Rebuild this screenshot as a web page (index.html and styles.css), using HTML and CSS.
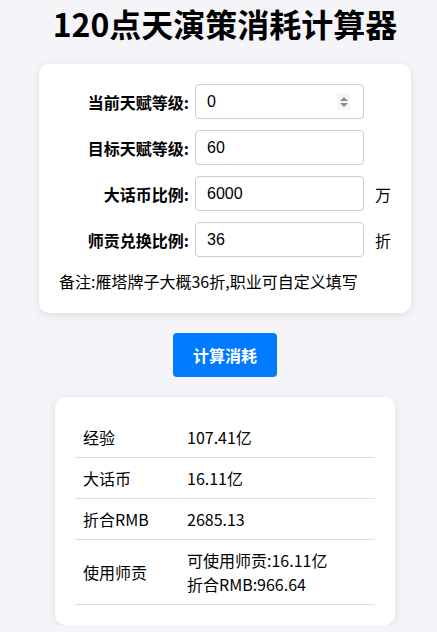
FILE: index.html
```html
<!DOCTYPE html>
<html lang="zh-CN">
<head>
<meta charset="utf-8">
<title>120点天演策消耗计算器</title>
<link rel="stylesheet" href="styles.css">
</head>
<body>
<div class="page">
  <h1 class="title">120点天演策消耗计算器</h1>
  <div class="card form-card">
    <div class="form-row">
      <label class="label">当前天赋等级:</label>
      <div class="field">
        <input class="input" type="text" value="0">
        <span class="spinner"><span class="tri up"></span><span class="tri down"></span></span>
      </div>
    </div>
    <div class="form-row">
      <label class="label">目标天赋等级:</label>
      <div class="field"><input class="input" type="text" value="60"></div>
    </div>
    <div class="form-row">
      <label class="label">大话币比例:</label>
      <div class="field"><input class="input" type="text" value="6000"></div>
      <span class="unit">万</span>
    </div>
    <div class="form-row">
      <label class="label">师贡兑换比例:</label>
      <div class="field"><input class="input" type="text" value="36"></div>
      <span class="unit">折</span>
    </div>
    <p class="note">备注:雁塔牌子大概36折,职业可自定义填写</p>
  </div>
  <button class="btn">计算消耗</button>
  <div class="card result-card">
    <table class="result">
      <tr><td class="k">经验</td><td class="v">107.41亿</td></tr>
      <tr><td class="k">大话币</td><td class="v">16.11亿</td></tr>
      <tr><td class="k">折合RMB</td><td class="v">2685.13</td></tr>
      <tr><td class="k">使用师贡</td><td class="v">可使用师贡:16.11亿<br>折合RMB:966.64</td></tr>
    </table>
  </div>
</div>
</body>
</html>
```
FILE: styles.css
```css
html, body {
  margin: 0;
  padding: 0;
  background: #f4f4f9;
}
body {
  font-family: "Noto Sans CJK SC", "Noto Sans", sans-serif;
  color: #000;
}
.page {
  width: 424px;
  padding-left: 13px;
  display: flex;
  flex-direction: column;
  align-items: center;
}
.title {
  margin: 0 0 17px;
  font-size: 32px;
  line-height: 47px;
  font-weight: 700;
  color: #000;
}
.card {
  background: #fff;
  border-radius: 10px;
  box-shadow: 0 2px 8px rgba(0, 0, 0, 0.1);
  padding: 20px;
  box-sizing: border-box;
}
.form-card {
  width: 372px;
}
.form-row {
  display: flex;
  align-items: center;
  height: 35px;
  margin-bottom: 11px;
}
.label {
  width: 130px;
  margin-right: 6px;
  text-align: right;
  font-size: 16px;
  font-weight: 700;
}
.field {
  position: relative;
  width: 169px;
  height: 35px;
}
.input {
  width: 100%;
  height: 35px;
  box-sizing: border-box;
  border: 1px solid #ccc;
  border-radius: 4px;
  padding: 0 11px;
  font-family: "Liberation Sans", Arial, sans-serif;
  font-size: 16px;
  color: #000;
  background: #fff;
  outline: none;
}
.spinner {
  position: absolute;
  right: 14px;
  top: 9px;
  width: 13px;
  height: 17px;
  background: #f6f6f6;
  display: flex;
  flex-direction: column;
  align-items: center;
  justify-content: center;
  gap: 2px;
}
.tri {
  width: 0;
  height: 0;
  border-left: 4px solid transparent;
  border-right: 4px solid transparent;
}
.tri.up { border-bottom: 4px solid #8a8a8a; }
.tri.down { border-top: 4px solid #8a8a8a; }
.unit {
  margin-left: 11px;
  font-size: 16px;
}
.note {
  margin: 12px 0 0;
  font-size: 16px;
  line-height: 24px;
}
.btn {
  margin: 20px 0;
  width: 104px;
  height: 44px;
  border: none;
  border-radius: 4px;
  background: #007bff;
  color: #fff;
  font-family: "Noto Sans CJK SC", sans-serif;
  font-size: 16px;
  font-weight: 700;
}
.result-card {
  width: 340px;
}
.result {
  width: 300px;
  border-collapse: collapse;
  font-size: 16px;
}
.result td {
  padding: 8px;
  line-height: 24px;
  border-bottom: 1px solid #ddd;
  vertical-align: middle;
  text-align: left;
}
.result .k {
  width: 88px;
}
```
